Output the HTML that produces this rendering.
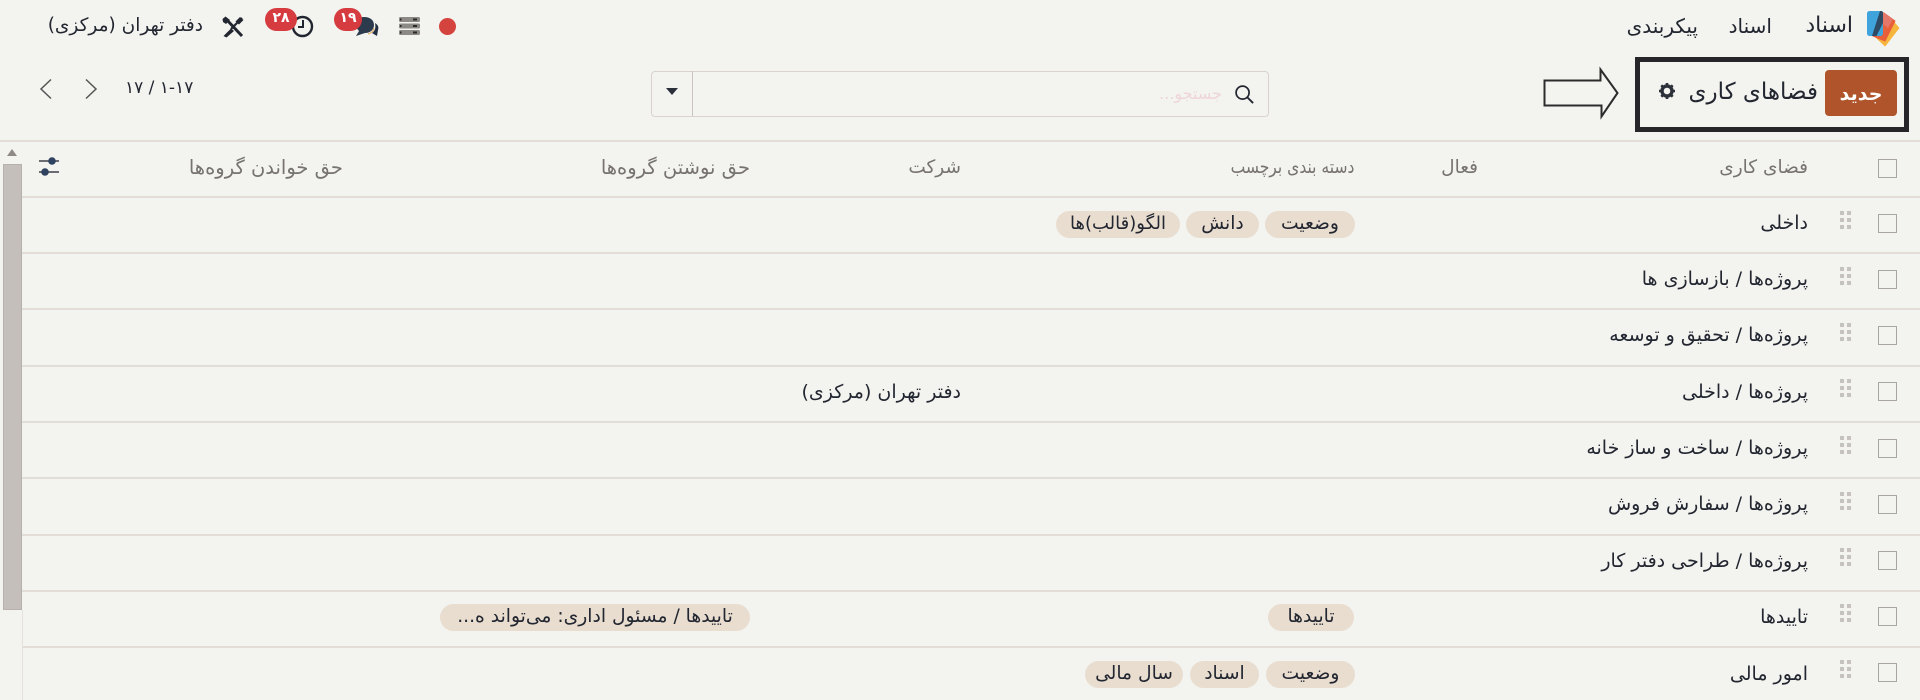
<!DOCTYPE html>
<html lang="fa" dir="ltr">
<head>
<meta charset="utf-8">
<title>فضاهای کاری</title>
<style>
html,body{margin:0;padding:0;width:1920px;height:700px;overflow:hidden;background:#f3f3ef;}
body{position:relative;font-family:"DejaVu Sans","Liberation Sans",sans-serif;color:#222630;}
.t{position:absolute;direction:rtl;white-space:nowrap;line-height:24px;height:24px;font-size:19px;}
.h{color:#77736f;font-size:19px;}
.l{position:absolute;left:22px;right:0;height:2px;background:#e2ddd7;}
.c{position:absolute;left:1878px;width:17px;height:17px;border:1px solid #a9a5a2;background:#f3f3ef;}
.p{position:absolute;height:27px;line-height:26px;border-radius:14px;background:#e9ddd0;text-align:center;direction:rtl;white-space:nowrap;font-size:18.7px;color:#222630;overflow:hidden;}
.d{position:absolute;left:1840px;width:4px;height:4px;background:#c6c2bd;box-shadow:7px 0 #c6c2bd,0 7px #c6c2bd,7px 7px #c6c2bd,0 14px #c6c2bd,7px 14px #c6c2bd;}
svg{position:absolute;display:block;}
</style>
</head>
<body>

<!-- top bar -->
<svg style="left:1864px;top:8px" width="40" height="42" viewBox="0 0 40 42">
<path d="M25 9 34.500 20 21 37.500 13 30z" fill="#f6b53c" stroke="#f6b53c" stroke-width="1.500" stroke-linejoin="round"/>
<path d="M20 5 31 13 21 33 9 28z" fill="#e8603a" stroke="#e8603a" stroke-linejoin="round"/>
<path d="M19 4 29 11 24 20 19 16z" fill="#e5766a"/>
<rect x="3" y="3" width="16" height="25" rx="2.500" fill="#3fa4dc"/>
<path d="M16 3h1a2 2 0 0 1 2 2v10L12.500 28H8z" fill="#2f4a63"/>
</svg>
<div class="t" style="right:67px;top:14px;font-size:22px">اسناد</div>
<div class="t" style="right:148px;top:14px;font-size:20px">اسناد</div>
<div class="t" style="right:222px;top:14px;font-size:20px">پیکربندی</div>

<div class="t" style="right:1717px;top:14px;font-size:18.5px">دفتر تهران (مرکزی)</div>
<svg style="left:222px;top:16px" width="22" height="22" viewBox="0 0 22 22">
<path d="M4 3 20 20" stroke="#222630" stroke-width="3"/>
<path d="M0.500 3 3.500 0.500 8 4 4 8 1 6z" fill="#222630"/>
<path d="M1.500 20 9 12.500l3 2.500-7.500 6.500z" fill="#222630"/>
<path d="M9 13 20 2" stroke="#222630" stroke-width="2.200"/>
<path d="M13.500 5.500 18 1l3.500 3-4.500 4.500z" fill="#222630"/>
</svg>
<svg style="left:291px;top:14px" width="23" height="24" viewBox="0 0 23 24">
<circle cx="11.500" cy="12.500" r="9.500" fill="none" stroke="#222630" stroke-width="2.400"/>
<path d="M12 6v7H7" fill="none" stroke="#222630" stroke-width="2"/>
</svg>
<div style="position:absolute;left:265px;top:8px;width:32px;height:23px;border-radius:12px;background:#d63b40;color:#fff;font-size:14px;font-weight:bold;text-align:center;line-height:20px">۲۸</div>
<svg style="left:354px;top:15px" width="26" height="24" viewBox="0 0 26 24">
<path d="M10 2c6 0 10 3 10 8s-4 8-9 8l-9 3 3-5C3 14 2 12 2 10c0-5 3-8 8-8z" fill="#2b3a4d"/>
<path d="M21 8c3 2 4 4 3 7l-1 6-5-3c3-2 4-5 3-10z" fill="#222f40"/>
<path d="M20 13c0 3-3 5-6 6" stroke="#e0a860" stroke-width="1" fill="none"/>
</svg>
<div style="position:absolute;left:334px;top:8px;width:28px;height:23px;border-radius:12px;background:#d63b40;color:#fff;font-size:14px;font-weight:bold;text-align:center;line-height:20px">۱۹</div>
<svg style="left:399px;top:17px" width="22" height="18" viewBox="0 0 22 18">
<rect x="0" y="0" width="21" height="5" rx="1.500" fill="#8d8a85"/>
<rect x="0" y="6.500" width="21" height="5" rx="1.500" fill="#8d8a85"/>
<rect x="0" y="13" width="21" height="5" rx="1.500" fill="#8d8a85"/>
<path d="M14 1.500h4v2h-4zM14 8h4v2h-4zM14 14.500h4v2h-4zM1 1.500h1.500v2H1zM1 8h1.500v2H1zM1 14.500h1.500v2H1z" fill="#2b2b2b"/>
</svg>
<div style="position:absolute;left:439px;top:18px;width:17px;height:17px;border-radius:50%;background:#d5433e"></div>

<!-- control panel -->
<svg style="left:38px;top:78px" width="16" height="22" viewBox="0 0 16 22"><path d="M13 1.500 3 11l10 9.500" fill="none" stroke="#555" stroke-width="1.500"/></svg>
<svg style="left:83px;top:78px" width="16" height="22" viewBox="0 0 16 22"><path d="M3 1.500 13 11 3 20.500" fill="none" stroke="#555" stroke-width="1.500"/></svg>
<div class="t" style="left:125px;top:76px;font-size:17px;direction:ltr">۱۷ / ۱-۱۷</div>

<div style="position:absolute;left:651px;top:71px;width:616px;height:44px;border:1px solid #d9d3cd;border-radius:4px;"></div>
<div style="position:absolute;left:692px;top:71px;width:1px;height:45px;background:#c9c4be"></div>
<svg style="left:665px;top:87px" width="14" height="9" viewBox="0 0 14 9"><path d="M1 1h12L7 8z" fill="#2a2f3a"/></svg>
<div class="t" style="right:698px;top:82px;font-size:16px;color:#efd5da">جستجو...</div>
<svg style="left:1234px;top:84px" width="21" height="21" viewBox="0 0 22 22"><circle cx="9" cy="9" r="6.800" fill="none" stroke="#222630" stroke-width="1.800"/><path d="M14 14l6 6" stroke="#222630" stroke-width="2"/></svg>

<svg style="left:1540px;top:66px" width="82" height="54" viewBox="0 0 82 54">
<path d="M4.500 14.500H60.500V3.500L77.500 27 61.500 50.500V39.500H4.500z" fill="none" stroke="#2c2c2c" stroke-width="2"/>
</svg>
<div style="position:absolute;left:1635px;top:57px;width:264px;height:65px;border:5px solid #26262a"></div>
<div style="position:absolute;left:1825px;top:70px;width:72px;height:46px;border-radius:4px;background:#b0552b;color:#fff;text-align:center;line-height:48px;font-size:19px;font-weight:bold;direction:rtl">جدید</div>
<div class="t" style="right:102px;top:80px;font-size:23px">فضاهای کاری</div>
<svg style="left:1658px;top:82px" width="18" height="18" viewBox="0 0 18 18">
<circle cx="9" cy="9" r="5" fill="none" stroke="#2c3038" stroke-width="3.400"/>
<path d="M9 1v3M9 14v3M1 9h3M14 9h3M3.300 3.300l2.100 2.100M12.600 12.600l2.100 2.100M3.300 14.700l2.100-2.100M12.600 5.400l2.100-2.100" stroke="#2c3038" stroke-width="2.600"/>
</svg>

<!-- table lines -->
<div class="l" style="left:0;top:140px"></div>
<div class="l" style="top:196px"></div>
<div class="l" style="top:252px"></div>
<div class="l" style="top:308px"></div>
<div class="l" style="top:365px"></div>
<div class="l" style="top:421px"></div>
<div class="l" style="top:477px"></div>
<div class="l" style="top:534px"></div>
<div class="l" style="top:590px"></div>
<div class="l" style="top:646px"></div>

<!-- scrollbar -->
<svg style="left:7px;top:149px" width="10" height="7" viewBox="0 0 10 7"><path d="M0 7 5 0l5 7z" fill="#8f8a85"/></svg>
<div style="position:absolute;left:3px;top:164px;width:17px;height:444px;background:#c4bfba;border:1px solid #b7b1ab"></div>
<div style="position:absolute;left:22px;top:610px;width:1px;height:90px;background:#e6e1da"></div>

<!-- header -->
<div class="c" style="top:159px"></div>
<div class="t h" style="right:112px;top:156px;font-size:18.5px">فضای کاری</div>
<div class="t h" style="right:442px;top:156px;font-size:18.5px">فعال</div>
<div class="t h" style="right:566px;top:156px;font-size:18.5px;transform:scaleX(.84);transform-origin:right center">دسته بندی برچسب</div>
<div class="t h" style="right:959px;top:156px;font-size:18.5px">شرکت</div>
<div class="t h" style="right:1170px;top:156px;font-size:19.500px">حق نوشتن گروه‌ها</div>
<div class="t h" style="right:1577px;top:156px;font-size:19.500px">حق خواندن گروه‌ها</div>
<svg style="left:38px;top:155px" width="22" height="22" viewBox="0 0 22 22">
<path d="M1 6h20M1 17h20" stroke="#3d4048" stroke-width="1.500"/>
<circle cx="14" cy="6" r="3.800" fill="#2f4260"/>
<circle cx="7" cy="17" r="3.800" fill="#2f4260"/>
</svg>

<!-- rows -->
<div class="c" style="top:214px"></div>
<div class="d" style="top:211px"></div>
<div class="t" style="right:112px;top:211px">داخلی</div>
<div class="p" style="left:1265px;top:211px;width:90px">وضعیت</div>
<div class="p" style="left:1186px;top:211px;width:73px">دانش</div>
<div class="p" style="left:1056px;top:211px;width:124px;font-size:18px">الگو(قالب)ها</div>

<div class="c" style="top:270px"></div>
<div class="d" style="top:267px"></div>
<div class="t" style="right:112px;top:267px">پروژه‌ها / بازسازی ها</div>

<div class="c" style="top:326px"></div>
<div class="d" style="top:323px"></div>
<div class="t" style="right:112px;top:323px">پروژه‌ها / تحقیق و توسعه</div>

<div class="c" style="top:382px"></div>
<div class="d" style="top:379px"></div>
<div class="t" style="right:112px;top:380px">پروژه‌ها / داخلی</div>
<div class="t" style="right:959px;top:380px">دفتر تهران (مرکزی)</div>

<div class="c" style="top:439px"></div>
<div class="d" style="top:436px"></div>
<div class="t" style="right:112px;top:436px">پروژه‌ها / ساخت و ساز خانه</div>

<div class="c" style="top:495px"></div>
<div class="d" style="top:492px"></div>
<div class="t" style="right:112px;top:492px">پروژه‌ها / سفارش فروش</div>

<div class="c" style="top:551px"></div>
<div class="d" style="top:548px"></div>
<div class="t" style="right:112px;top:549px">پروژه‌ها / طراحی دفتر کار</div>

<div class="c" style="top:607px"></div>
<div class="d" style="top:604px"></div>
<div class="t" style="right:112px;top:605px">تاییدها</div>
<div class="p" style="left:1268px;top:604px;width:86px">تاییدها</div>
<div class="p" style="left:440px;top:604px;width:310px">تاییدها / مسئول اداری: می‌تواند ه...</div>

<div class="c" style="top:663px"></div>
<div class="d" style="top:660px"></div>
<div class="t" style="right:112px;top:662px">امور مالی</div>
<div class="p" style="left:1266px;top:661px;width:89px">وضعیت</div>
<div class="p" style="left:1190px;top:661px;width:69px">اسناد</div>
<div class="p" style="left:1085px;top:661px;width:98px">سال مالی</div>

</body>
</html>
